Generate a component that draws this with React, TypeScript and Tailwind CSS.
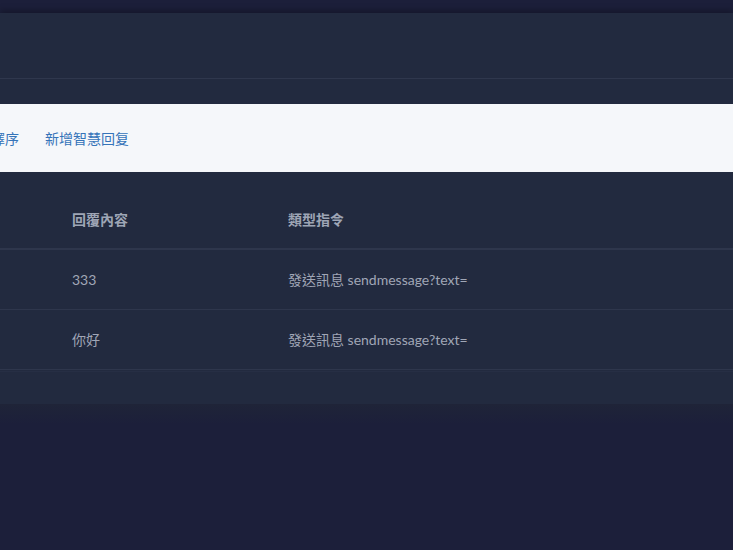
import React from 'react';

const rows = [
  { reply: '333', type: '發送訊息 sendmessage?text=' },
  { reply: '你好', type: '發送訊息 sendmessage?text=' },
];

export default function App() {
  return (
    <div
      className="w-[733px] h-[550px] overflow-hidden bg-[#1c1f3a] pt-[13px]"
      style={{ fontFamily: 'Lato, "Noto Sans CJK TC", sans-serif' }}
    >
      <div className="bg-[#222a3f] shadow-[0_-3px_6px_rgba(0,0,0,0.25)] pb-[32px]">
        {/* top bar */}
        <div className="h-[66px] border-b border-[#2f374d]" />

        {/* toolbar */}
        <div className="mt-[25px] h-[68px] bg-[#f5f7fa] flex items-center gap-[26px]">
          <span className="ml-[-9px] text-[14px] text-[#3574b9]">擇序</span>
          <span className="text-[14px] text-[#3574b9]">新增智慧回复</span>
        </div>

        {/* table */}
        <div>
          <div className="h-[78px] flex items-end pb-[18px] border-b-2 border-[#2e364c] text-[14px] font-bold text-[#9ea5b5]">
            <div className="w-[216px] pl-[72px] shrink-0 box-content">回覆內容</div>
            <div>類型指令</div>
          </div>
          {rows.map((r, i) => (
            <div
              key={i}
              className="h-[60px] flex items-center border-b border-[#2e364c] text-[14px] text-[#a0a6b6]"
            >
              <div className="w-[216px] pl-[72px] shrink-0 box-content">{r.reply}</div>
              <div>{r.type}</div>
            </div>
          ))}
          <div className="h-[2px] border-b border-[#262e44]" />
        </div>
      </div>
      <div className="h-[20px] bg-gradient-to-b from-[#1f2438] to-[#1c1f3a]" />
    </div>
  );
}
